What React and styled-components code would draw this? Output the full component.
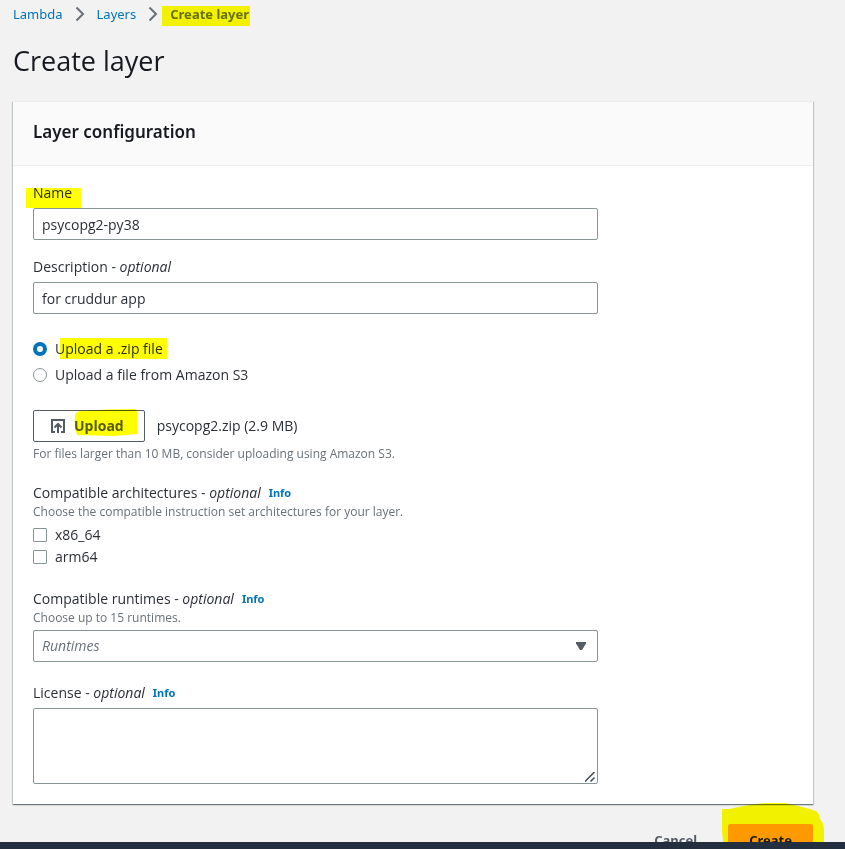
import React from "react";
import styled, { createGlobalStyle } from "styled-components";

const displayFont = `"Noto Sans", "Open Sans", sans-serif`;

const GlobalStyle = createGlobalStyle`
  *, *::before, *::after { box-sizing: border-box; }
  body {
    margin: 0;
    background: #f2f2f2;
    color: #2b2f36;
    font-family: "Open Sans", "Noto Sans", sans-serif;
    font-size: 14px;
    line-height: 22px;
  }
  button, input, select, textarea { font: inherit; color: inherit; }
`;

const Shell = styled.div`
  display: flex;
  flex-direction: column;
  height: 100vh;
`;

const Main = styled.main`
  flex: 1;
  min-height: 0;
  overflow-y: auto;
  scrollbar-width: none;
  padding: 3px 32px 20px 13px;
`;

const Footer = styled.footer`
  flex: none;
  height: 7px;
  background: #232f3e;
`;

const Breadcrumbs = styled.nav`
  display: flex;
  align-items: center;
  gap: 12px;
  font-family: ${displayFont};
  font-size: 13px;
`;

const Crumb = styled.a`
  color: #0073bb;
  text-decoration: none;
`;

const CurrentCrumb = styled.span`
  color: #687078;
  font-weight: 700;
`;

const Chevron = styled.svg`
  width: 10px;
  height: 16px;
  fill: none;
  stroke: #687078;
  stroke-width: 2;
`;

const Title = styled.h1`
  margin: 18px 0 22px;
  color: #16191f;
  font-size: 27px;
  font-weight: 400;
  line-height: 36px;
`;

const Card = styled.section`
  background: #fff;
  border-top: 1px solid #eaeded;
  box-shadow: 0 1px 1px 0 rgba(0, 28, 36, 0.4), 1px 1px 1px 0 rgba(0, 28, 36, 0.15),
    -1px 1px 1px 0 rgba(0, 28, 36, 0.15);
`;

const CardHeader = styled.header`
  padding: 18px 20px 21px;
  background: #fafafa;
  border-bottom: 1px solid #eaeded;
`;

const CardTitle = styled.h2`
  margin: 0;
  color: #16191f;
  font-family: ${displayFont};
  font-size: 17px;
  font-weight: 600;
  line-height: 24px;
`;

const Form = styled.form`
  display: flex;
  flex-direction: column;
  gap: 20px;
  padding: 16px 20px 20px;
`;

const Column = styled.div`
  display: flex;
  flex-direction: column;
  gap: ${(p) => p.$gap}px;
  width: calc(75% - 5px);
`;

const Field = styled.div`
  display: flex;
  flex-direction: column;
  gap: 4px;
`;

const FieldGroup = styled.fieldset`
  display: flex;
  flex-direction: column;
  gap: 4px;
  min-width: 0;
  margin: 0;
  padding: 0;
  border: 0;
`;

const LabelRow = styled.div`
  display: flex;
  gap: 8px;
`;

const InfoLink = styled.a`
  color: #0073bb;
  font-family: ${displayFont};
  font-size: 11px;
  font-weight: 700;
  text-decoration: none;
`;

const Hint = styled.p`
  margin: 0;
  color: #687078;
  font-size: 12px;
  line-height: 16px;
`;

const TextInput = styled.input`
  width: 100%;
  height: 32px;
  padding: 0 8px;
  border: 1px solid #879596;
  border-radius: 2px;
  background: #fff;
`;

const ControlBox = styled.div`
  position: relative;
`;

const TextArea = styled.textarea`
  display: block;
  width: 100%;
  height: 76px;
  padding: 4px 8px;
  border: 1px solid #879596;
  border-radius: 2px;
  background: #fff;
  resize: vertical;
  &::-webkit-resizer { background: transparent; }
`;

const ResizeGrip = styled.svg`
  position: absolute;
  right: 3px;
  bottom: 2px;
  width: 10px;
  height: 10px;
  fill: none;
  stroke: #414750;
  pointer-events: none;
`;

const Select = styled.select`
  display: block;
  appearance: none;
  width: 100%;
  height: 32px;
  padding: 0 32px 0 8px;
  border: 1px solid #879596;
  border-radius: 2px;
  background: #fff;
  color: #687078;
  font-style: italic;
`;

const Caret = styled.svg`
  position: absolute;
  right: 12px;
  top: 12px;
  width: 10px;
  height: 8px;
  fill: #545b64;
  pointer-events: none;
`;

const Options = styled.div`
  display: flex;
  flex-direction: column;
  gap: ${(p) => p.$gap}px;
`;

const Option = styled.label`
  display: flex;
  align-items: center;
  gap: 8px;
`;

const Radio = styled.input`
  appearance: none;
  width: 14px;
  height: 14px;
  margin: 0;
  border: 1px solid #879596;
  border-radius: 50%;
  background: #fff;
  &:checked { border: 4px solid #0073bb; }
`;

const Checkbox = styled.input`
  appearance: none;
  width: 14px;
  height: 14px;
  margin: 0;
  border: 1px solid #879596;
  border-radius: 1px;
  background: #fff;
  &:checked { background: #0073bb; }
`;

const UploadRow = styled.div`
  display: flex;
  align-items: center;
  gap: 12px;
`;

const Button = styled.button`
  display: inline-flex;
  align-items: center;
  gap: 8px;
  height: 32px;
  padding: 0 20px;
  border: 1px solid transparent;
  border-radius: 2px;
  background: ${(p) => (p.$primary ? "#ff9900" : "transparent")};
  color: ${(p) => (p.$primary ? "#16191f" : "#545b64")};
  font-family: ${displayFont};
  font-size: 13px;
  font-weight: 700;
  white-space: nowrap;
`;

const UploadButton = styled(Button)`
  padding-left: 16px;
  border-color: #545b64;
  font-family: inherit;
  font-size: 14px;
`;

const UploadIcon = styled.svg`
  width: 16px;
  height: 16px;
  fill: none;
  stroke: #545b64;
  stroke-width: 2;
`;

const Actions = styled.div`
  display: flex;
  justify-content: flex-end;
  gap: 10px;
  margin-top: 20px;
`;

const Marked = styled.span`
  position: relative;
  white-space: nowrap;
`;

const Marker = styled.span`
  position: absolute;
  inset: ${(p) => p.$inset};
  background: #ffff00;
  mix-blend-mode: multiply;
  pointer-events: none;
`;

const BrushMark = styled.svg`
  position: absolute;
  left: ${(p) => p.$left}px;
  top: ${(p) => p.$top}px;
  fill: #ffff00;
  mix-blend-mode: multiply;
  pointer-events: none;
`;

function Separator() {
  return (
    <Chevron viewBox="0 0 10 16" aria-hidden="true">
      <path d="M1.5 1.5 8 8l-6.500 6.500" />
    </Chevron>
  );
}

export default function App() {
  return (
    <Shell>
      <GlobalStyle />
      <Main>
        <Breadcrumbs aria-label="Breadcrumbs">
          <Crumb href="#lambda">Lambda</Crumb>
          <Separator />
          <Crumb href="#layers">Layers</Crumb>
          <Separator />
          <Marked>
            <CurrentCrumb aria-current="page">Create layer</CurrentCrumb>
            <Marker $inset="3px -1px -1px -8px" />
          </Marked>
        </Breadcrumbs>
        <Title>Create layer</Title>

        <Card>
          <CardHeader>
            <CardTitle>Layer configuration</CardTitle>
          </CardHeader>
          <Form id="layer-form" onSubmit={(e) => e.preventDefault()}>
            <Column $gap={24}>
              <Options $gap={16}>
                <Field>
                  <LabelRow>
                    <Marked>
                      <label htmlFor="name">Name</label>
                      <Marker $inset="6px -9px -4px -7px" />
                    </Marked>
                  </LabelRow>
                  <TextInput id="name" defaultValue="psycopg2-py38" />
                </Field>
                <Field>
                  <label htmlFor="description">
                    Description - <em>optional</em>
                  </label>
                  <TextInput id="description" defaultValue="for cruddur app" />
                </Field>
              </Options>

              <Options $gap={4} role="radiogroup" aria-label="Code source">
                <Option>
                  <Radio type="radio" name="source" defaultChecked />
                  <Marked>
                    Upload a .zip file
                    <Marker $inset="0 -4px 1px 5px" />
                  </Marked>
                </Option>
                <Option>
                  <Radio type="radio" name="source" />
                  Upload a file from Amazon S3
                </Option>
              </Options>

              <Field>
                <UploadRow>
                  <UploadButton type="button">
                    <UploadIcon viewBox="0 0 16 16" aria-hidden="true">
                      <path d="M5 14H2V2h12v12h-3M8 15V6M4.500 9.500 8 6l3.500 3.500" />
                    </UploadIcon>
                    <Marked>
                      Upload
                      <BrushMark $left={0} $top={-6} width="64" height="28" viewBox="0 0 64 28">
                        <path d="M1 5 5 2Q32 0 62 0L64 6 63 25 40 27 3 26Q0 20 1 5Z" />
                      </BrushMark>
                    </Marked>
                  </UploadButton>
                  <span>psycopg2.zip (2.9 MB)</span>
                </UploadRow>
                <Hint>For files larger than 10 MB, consider uploading using Amazon S3.</Hint>
              </Field>
            </Column>

            <FieldGroup aria-labelledby="arch-label">
              <div>
                <LabelRow>
                  <span id="arch-label">
                    Compatible architectures - <em>optional</em>
                  </span>
                  <InfoLink href="#architectures">Info</InfoLink>
                </LabelRow>
                <Hint>Choose the compatible instruction set architectures for your layer.</Hint>
              </div>
              <Options $gap={0}>
                <Option>
                  <Checkbox type="checkbox" />
                  x86_64
                </Option>
                <Option>
                  <Checkbox type="checkbox" />
                  arm64
                </Option>
              </Options>
            </FieldGroup>

            <Column $gap={20}>
              <Field>
                <div>
                  <LabelRow>
                    <label htmlFor="runtimes">
                      Compatible runtimes - <em>optional</em>
                    </label>
                    <InfoLink href="#runtimes">Info</InfoLink>
                  </LabelRow>
                  <Hint>Choose up to 15 runtimes.</Hint>
                </div>
                <ControlBox>
                  <Select id="runtimes">
                    <option>Runtimes</option>
                  </Select>
                  <Caret viewBox="0 0 10 8" aria-hidden="true">
                    <path d="M0 0h10v1.500L6 8H4L0 1.500z" />
                  </Caret>
                </ControlBox>
              </Field>
              <Field>
                <LabelRow>
                  <label htmlFor="license">
                    License - <em>optional</em>
                  </label>
                  <InfoLink href="#license">Info</InfoLink>
                </LabelRow>
                <ControlBox>
                  <TextArea id="license" />
                  <ResizeGrip viewBox="0 0 10 10" aria-hidden="true">
                    <path strokeWidth="1.5" d="M0 9.500 9.500 0M5.500 9.500 9.500 5.500" />
                  </ResizeGrip>
                </ControlBox>
              </Field>
            </Column>
          </Form>
        </Card>

        <Actions>
          <Button type="button">Cancel</Button>
          <Marked>
            <Button type="submit" form="layer-form" $primary>
              Create
            </Button>
            <BrushMark $left={-6} $top={-21} width="102" height="60" viewBox="0 0 102 60">
              <path d="M0 6H7Q28 1 45 0H63Q82 4 94 8 98 11 98 16 102 20 102 28V60H3L0 28Z" />
            </BrushMark>
          </Marked>
        </Actions>
      </Main>
      <Footer />
    </Shell>
  );
}
